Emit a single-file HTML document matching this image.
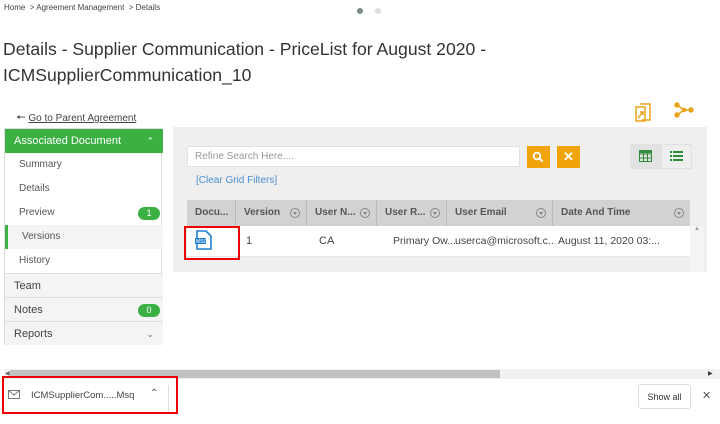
<!DOCTYPE html>
<html><head><style>
*{margin:0;padding:0;box-sizing:border-box}
body{width:720px;height:424px;overflow:hidden;background:#fff;font-family:"Liberation Sans",sans-serif;color:#333;position:relative}
.a{position:absolute}
.side div.it{position:absolute;left:0;width:158px;height:24px;font-size:10px;color:#555;padding-left:14px;line-height:24px}
.th{position:absolute;top:0;height:26px;line-height:26px;font-size:10px;font-weight:bold;color:#555;padding-left:8px;border-right:1px solid #bbb}
.td{position:absolute;top:0;height:31px;line-height:31px;font-size:11px;color:#444;padding-left:8px;white-space:nowrap;overflow:hidden}
.flt{position:absolute;right:6px;top:8px;width:10px;height:10px;border:1px solid #888;border-radius:50%}
.flt:after{content:"";position:absolute;left:2px;top:3px;border-left:2px solid transparent;border-right:2px solid transparent;border-top:3px solid #888}
</style></head><body>
<div class="a" style="left:4px;top:3px;font-size:8px;color:#444">Home &nbsp;&gt; Agreement Management &nbsp;&gt; Details</div>
<div class="a" style="left:357px;top:8px;width:6px;height:6px;border-radius:50%;background:#7d8a86"></div>
<div class="a" style="left:375px;top:8px;width:6px;height:6px;border-radius:50%;background:#ddd"></div>
<div class="a" style="left:3px;top:36px;font-size:17.6px;color:#333;line-height:26px">Details - Supplier Communication - PriceList for August 2020 -<br>ICMSupplierCommunication_10</div>
<div class="a" style="left:16px;top:109px;font-size:10px;color:#444"><span style="font-size:11px">&#129044;</span> <u>Go to Parent Agreement</u></div>
<svg class="a" style="left:632px;top:101px" width="22" height="22" viewBox="0 0 22 22" fill="none" stroke="#e8a318" stroke-width="1.5"><path d="M8 3h10v16h-8"/><path d="M4 6h9v14H4z"/><path d="M6 17l5-6m-3 0l3 0 0 3"/></svg>
<svg class="a" style="left:673px;top:101px" width="22" height="18" viewBox="0 0 22 18" fill="#e8a318" stroke="#e8a318" stroke-width="1.4"><circle cx="4" cy="4" r="2"/><circle cx="4" cy="14" r="2"/><circle cx="18" cy="9" r="2"/><circle cx="11" cy="9" r="1.6"/><path d="M4 4l7 5 7 0M4 14l7-5" fill="none"/></svg>
<div class="side a" style="left:4px;top:128px;width:158px;height:217px;border:1px solid #ddd">
 <div class="it" style="top:0;height:24px;background:#3cb043;color:#fff;font-size:11px;padding-left:9px">Associated Document<span style="position:absolute;right:9px;font-size:9px">&#8963;</span></div>
 <div class="it" style="top:24px">Summary</div>
 <div class="it" style="top:48px">Details</div>
 <div class="it" style="top:72px">Preview<span style="position:absolute;right:3px;top:6px;width:22px;height:13px;border-radius:7px;background:#3cb043;color:#fff;font-size:9px;text-align:center;line-height:13px">1</span></div>
 <div class="it" style="top:96px;background:#f4f4f4;border-left:3px solid #3cb043;padding-left:14px">Versions</div>
 <div class="it" style="top:120px">History</div>
 <div class="it" style="top:144px;background:#f4f4f4;border-top:1px solid #ddd;font-size:11px;color:#444;padding-left:9px">Team</div>
 <div class="it" style="top:168px;background:#f4f4f4;border-top:1px solid #ddd;font-size:11px;color:#444;padding-left:9px">Notes<span style="position:absolute;right:3px;top:6px;width:22px;height:13px;border-radius:7px;background:#3cb043;color:#fff;font-size:9px;text-align:center;line-height:13px">0</span></div>
 <div class="it" style="top:192px;background:#f4f4f4;border-top:1px solid #ddd;font-size:11px;color:#444;padding-left:9px">Reports<span style="position:absolute;right:9px;font-size:9px;color:#777">&#8964;</span></div>
</div>
<div class="a" style="left:173px;top:127px;width:534px;height:145px;background:#efefef"></div>
<div class="a" style="left:187px;top:146px;width:333px;height:21px;background:#fff;border:1px solid #e2e2e2;font-size:10px;color:#999;padding-left:7px;line-height:20px">Refine Search Here....</div>
<div class="a" style="left:527px;top:146px;width:23px;height:22px;background:#f0a30a"></div>
<svg class="a" style="left:532px;top:151px" width="12" height="12"><circle cx="5" cy="5" r="3.3" fill="none" stroke="#fff" stroke-width="1.8"/><path d="M7.5 7.5l3 3" stroke="#fff" stroke-width="2"/></svg>
<div class="a" style="left:557px;top:146px;width:23px;height:22px;background:#f0a30a;color:#fff;text-align:center;line-height:22px;font-size:13px;font-weight:bold">&#10005;</div>
<div class="a" style="left:630px;top:144px;width:31px;height:25px;background:#e2e2e2"></div>
<div class="a" style="left:661px;top:144px;width:31px;height:25px;border:1px solid #e2e2e2"></div>
<svg class="a" style="left:639px;top:150px" width="13" height="12"><rect x=".5" y=".5" width="12" height="11" fill="none" stroke="#2e8b3a"/><path d="M0 4h13M0 8h13M4.5 0v12M8.5 0v12" stroke="#2e8b3a"/><rect x="0" y="0" width="13" height="3" fill="#2e8b3a"/></svg>
<svg class="a" style="left:670px;top:150px" width="13" height="12" fill="#2e8b3a"><rect x="0" y="1" width="2" height="2"/><rect x="3" y="1" width="10" height="2"/><rect x="0" y="5" width="2" height="2"/><rect x="3" y="5" width="10" height="2"/><rect x="0" y="9" width="2" height="2"/><rect x="3" y="9" width="10" height="2"/></svg>
<div class="a" style="left:196px;top:175px;font-size:10px;color:#4a8fd0">[Clear Grid Filters]</div>
<div class="a" style="left:187px;top:200px;width:503px;height:26px;background:#d2d2d2">
 <div class="th" style="left:0;width:49px">Docu...</div>
 <div class="th" style="left:49px;width:71px">Version<span class="flt"></span></div>
 <div class="th" style="left:120px;width:70px">User N...<span class="flt"></span></div>
 <div class="th" style="left:190px;width:70px">User R...<span class="flt"></span></div>
 <div class="th" style="left:260px;width:106px">User Email<span class="flt"></span></div>
 <div class="th" style="left:366px;width:137px;border:none">Date And Time<span class="flt"></span></div>
</div>
<div class="a" style="left:187px;top:226px;width:503px;height:31px;background:#fff;border-bottom:1px solid #e6e6e6">
 <div class="td" style="left:59px;width:61px;padding-left:0">1</div>
 <div class="td" style="left:132px;width:58px;padding-left:0">CA</div>
 <div class="td" style="left:206px;width:62px;padding-left:0;font-size:10.5px">Primary Ow...</div>
 <div class="td" style="left:268px;width:100px;padding-left:0;font-size:10.5px">userca@microsoft.c...</div>
 <div class="td" style="left:371px;width:132px;padding-left:0;font-size:10.5px">August 11, 2020 03:...</div>
</div>
<div class="a" style="left:690px;top:226px;width:14px;height:46px;background:#f4f4f4;font-size:6px;color:#999;text-align:center">&#9650;</div>
<svg class="a" style="left:194px;top:230px" width="18" height="21" viewBox="0 0 18 21"><path d="M3 1h9l5 5v13H3z" fill="#fff" stroke="#1e7fd0" stroke-width="1.6"/><rect x="1" y="8" width="11" height="6" fill="#1e7fd0"/><text x="2" y="13" font-size="5" fill="#fff" font-family="Liberation Sans">MSG</text></svg>
<div class="a" style="left:184px;top:226px;width:56px;height:34px;border:2px solid #e00"></div>
<div class="a" style="left:4px;top:369px;width:716px;height:10px;background:#f1f1f1"></div>
<div class="a" style="left:10px;top:370px;width:490px;height:8px;background:#c1c1c1"></div>
<div class="a" style="left:5px;top:370px;font-size:6px;color:#666">&#9664;</div>
<div class="a" style="left:708px;top:370px;font-size:6px;color:#333">&#9654;</div>
<div class="a" style="left:0;top:380px;width:720px;height:44px;background:#fff"></div>
<div class="a" style="left:168px;top:385px;width:1px;height:27px;background:#ddd"></div>
<svg class="a" style="left:8px;top:390px" width="12" height="9"><rect x=".5" y=".5" width="11" height="8" fill="none" stroke="#777"/><path d="M.5 .5l5.5 4.5 5.5-4.5" fill="none" stroke="#777"/></svg>
<div class="a" style="left:31px;top:390px;font-size:9.5px;color:#444">ICMSupplierCom.....Msq</div>
<div class="a" style="left:150px;top:388px;font-size:10px;color:#555">&#8963;</div>
<div class="a" style="left:2px;top:376px;width:176px;height:38px;border:2px solid #e00"></div>
<div class="a" style="left:638px;top:384px;width:53px;height:25px;border:1px solid #ddd;border-radius:3px;font-size:9px;color:#333;text-align:center;line-height:24px">Show all</div>
<div class="a" style="left:702px;top:389px;font-size:11px;color:#555">&#10005;</div>
</body></html>
